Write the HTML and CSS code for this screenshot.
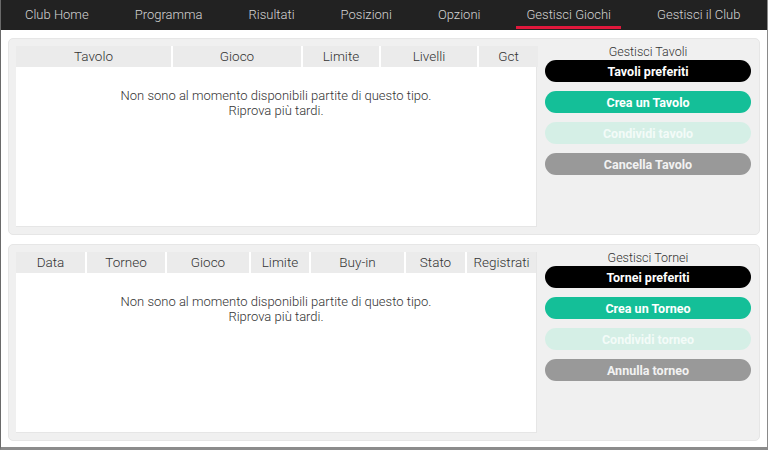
FILE: index.html
```html
<!DOCTYPE html>
<html lang="it">
<head>
    <meta charset="UTF-8">
    <meta name="viewport" content="width=device-width, initial-scale=1.0">
    <title>Gestisci Giochi</title>
    <link rel="stylesheet" href="styles.css">
</head>
<body>
    <div class="window">
        <nav class="topnav">
            <a href="#">Club Home</a>
            <a href="#">Programma</a>
            <a href="#">Risultati</a>
            <a href="#">Posizioni</a>
            <a href="#">Opzioni</a>
            <a href="#" class="active">Gestisci Giochi</a>
            <a href="#">Gestisci il Club</a>
        </nav>

        <div class="content">
            <section class="panel">
                <div class="list">
                    <div class="list-head tables">
                        <div>Tavolo</div>
                        <div>Gioco</div>
                        <div>Limite</div>
                        <div>Livelli</div>
                        <div>Gct</div>
                    </div>
                    <div class="empty">Non sono al momento disponibili partite di questo tipo.<br>Riprova più tardi.</div>
                </div>
                <div class="actions">
                    <div class="actions-title">Gestisci Tavoli</div>
                    <button class="btn btn-black">Tavoli preferiti</button>
                    <button class="btn btn-green">Crea un Tavolo</button>
                    <button class="btn btn-light" disabled>Condividi tavolo</button>
                    <button class="btn btn-gray">Cancella Tavolo</button>
                </div>
            </section>

            <section class="panel">
                <div class="list">
                    <div class="list-head tournaments">
                        <div>Data</div>
                        <div>Torneo</div>
                        <div>Gioco</div>
                        <div>Limite</div>
                        <div>Buy-in</div>
                        <div>Stato</div>
                        <div>Registrati</div>
                    </div>
                    <div class="empty">Non sono al momento disponibili partite di questo tipo.<br>Riprova più tardi.</div>
                </div>
                <div class="actions">
                    <div class="actions-title">Gestisci Tornei</div>
                    <button class="btn btn-black">Tornei preferiti</button>
                    <button class="btn btn-green">Crea un Torneo</button>
                    <button class="btn btn-light" disabled>Condividi torneo</button>
                    <button class="btn btn-gray">Annulla torneo</button>
                </div>
            </section>
        </div>
    </div>
</body>
</html>
```

FILE: styles.css
```css
html, body {
    margin: 0;
    padding: 0;
    background-color: #ffffff;
}
body {
    font-family: Roboto, "Liberation Sans", Arial, sans-serif;
    color: #444;
}
.window {
    box-sizing: border-box;
    width: 768px;
    height: 450px;
    border-left: 1px solid #6a6a6a;
    border-right: 1px solid #8a8a8a;
    border-bottom: 3px solid #8c8c8c;
    background-color: #fff;
}
.topnav {
    display: flex;
    gap: 26px;
    height: 30px;
    padding-left: 14px;
    background-color: #222222;
    overflow: hidden;
}
.topnav a {
    position: relative;
    padding: 0 10px;
    line-height: 29px;
    font-size: 13px;
    font-weight: 300;
    color: #d4d4d4;
    text-decoration: none;
    white-space: nowrap;
}
.topnav a.active::after {
    content: "";
    position: absolute;
    left: 0;
    right: 0;
    bottom: 1px;
    height: 3px;
    background-color: #e0183c;
}
.content {
    display: flex;
    flex-direction: column;
    gap: 9px;
    padding: 8px 7px 0 7px;
}
.panel {
    display: flex;
    gap: 8px;
    height: 197px;
    box-sizing: border-box;
    padding: 7px 8px 7px 7px;
    background-color: #f0f0f0;
    border: 1px solid #e6e6e6;
    border-radius: 5px;
}
.list {
    width: 520px;
    background-color: #fff;
    border-right: 1px solid #e6e6e6;
    border-bottom: 1px solid #e6e6e6;
}
.list-head {
    display: grid;
    height: 21px;
    background-color: #fff;
    column-gap: 2px;
}
.list-head div {
    background-color: #ebebeb;
    text-align: center;
    font-size: 13.5px;
    font-weight: 300;
    line-height: 21px;
    color: #333;
    white-space: nowrap;
}
.list-head.tables {
    grid-template-columns: 155px 128px 76px 96px 59px;
}
.list-head.tournaments {
    grid-template-columns: 69px 78px 82px 58px 93px 59px 69px;
}
.empty {
    padding-top: 21px;
    text-align: center;
    font-size: 13px;
    font-weight: 300;
    line-height: 15px;
    color: #333;
}
.actions {
    display: flex;
    flex-direction: column;
    gap: 9px;
    width: 207px;
}
.actions-title {
    text-align: center;
    font-size: 12.5px;
    font-weight: 300;
    line-height: 12px;
    height: 5px;
    color: #333;
}
.btn {
    height: 22px;
    border: none;
    border-radius: 11px;
    font-family: Roboto, "Liberation Sans", Arial, sans-serif;
    font-weight: bold;
    font-size: 12.5px;
    color: #fff;
    cursor: pointer;
}
.btn-black {
    background-color: #000;
}
.btn-green {
    background-color: #14bf98;
}
.btn-light {
    background-color: #d5efe6;
    color: #f3fbf8;
    cursor: default;
}
.btn-gray {
    background-color: #999999;
    color: #f2f2f2;
}
```
